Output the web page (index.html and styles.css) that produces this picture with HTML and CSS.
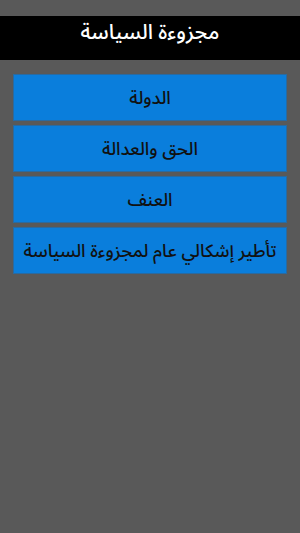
FILE: index.html
```html
<!DOCTYPE html>
<html lang="ar" dir="rtl">
<head>
    <meta charset="UTF-8">
    <title>مجزوءة السياسة</title>
    <link rel="stylesheet" href="styles.css">
</head>
<body>
    <div class="top-strip"></div>
    <div class="title-bar">
        <h1>مجزوءة السياسة</h1>
    </div>

    <!-- lessons list -->
    <div class="lesson-list">
        <a class="lesson-btn" href="#">الدولة</a>
        <a class="lesson-btn" href="#">الحق والعدالة</a>
        <a class="lesson-btn" href="#">العنف</a>
        <a class="lesson-btn" href="#">تأطير إشكالي عام لمجزوءة السياسة</a>
    </div>
</body>
</html>
```

FILE: styles.css
```css
html, body {
    margin: 0;
    padding: 0;
    height: 100%;
}

body {
    background-color: #595959;
    font-family: "Noto Sans Arabic", "DejaVu Sans", sans-serif;
}

.top-strip {
    height: 16px;
}

.title-bar {
    background-color: #000;
    height: 44px;
    display: flex;
    justify-content: center;
    align-items: flex-start;
}

.title-bar h1 {
    margin: 0;
    margin-top: -6px;
    color: #fff;
    font-size: 21px;
    font-weight: 500;
}

.lesson-list {
    display: flex;
    flex-direction: column;
    gap: 4px;
    padding: 14px 13px 0 13px;
}

.lesson-btn {
    display: flex;
    align-items: center;
    justify-content: center;
    height: 45px;
    background-color: #0a7edc;
    border: 1px solid #2a6aa0;
    color: #111;
    font-size: 18px;
    font-weight: 500;
    text-decoration: none;
    white-space: nowrap;
}
```
